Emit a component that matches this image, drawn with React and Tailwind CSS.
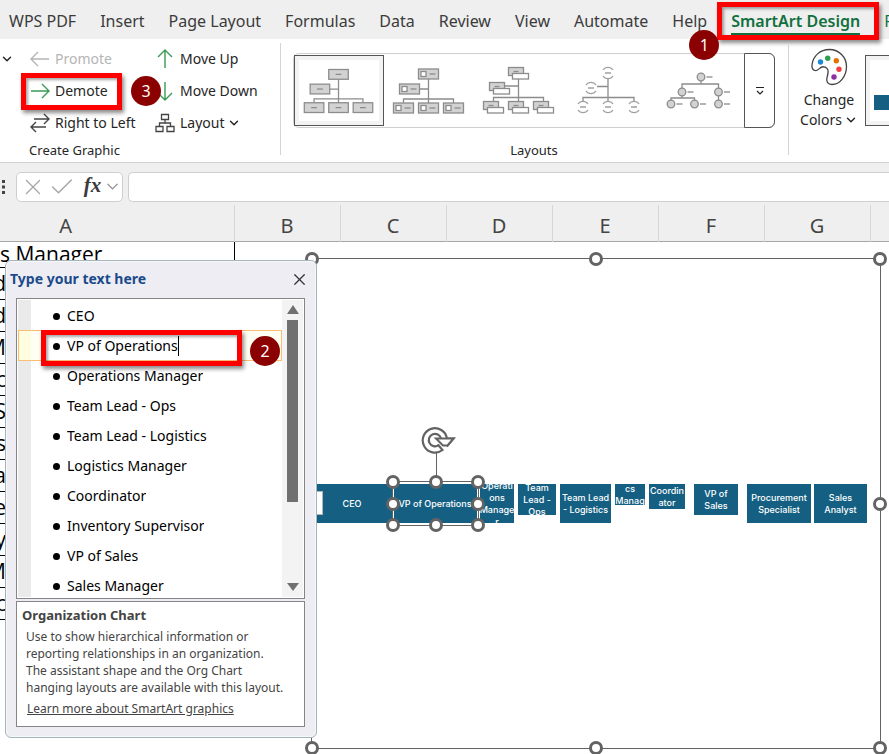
import React from 'react';
import { ChevronDown, X, Check } from 'lucide-react';

const TABS = ['WPS PDF', 'Insert', 'Page Layout', 'Formulas', 'Data', 'Review', 'View', 'Automate', 'Help'];

const COLUMNS = ['B', 'C', 'D', 'E', 'F', 'G'];

const ROWS = ['d', 'd', 'M', 'c', 'S', 's', 'a', 'e', 'y', 'M', 'c'];

const LINES = [
  'CEO',
  'VP of Operations',
  'Operations Manager',
  'Team Lead - Ops',
  'Team Lead - Logistics',
  'Logistics Manager',
  'Coordinator',
  'Inventory Supervisor',
  'VP of Sales',
  'Sales Manager',
];

// x is measured from the left edge of the diagram frame
const NODES = [
  { x: -1, w: 82, h: 39, text: ['CEO'] },
  { x: 81, w: 84, h: 39, text: ['VP of Operations'] },
  { x: 168, w: 34, h: 39, text: ['Operati', 'ons', 'Manage', 'r'] },
  { x: 206, w: 38, h: 31, text: ['Team', 'Lead -', 'Ops'] },
  { x: 248, w: 51, h: 39, text: ['Team Lead', '- Logistics'] },
  { x: 303, w: 30, h: 21, text: ['cs', 'Manag'] },
  { x: 337, w: 36, h: 25, text: ['Coordin', 'ator'] },
  { x: 382, w: 44, h: 31, text: ['VP of', 'Sales'] },
  { x: 435, w: 64, h: 39, text: ['Procurement', 'Specialist'] },
  { x: 502, w: 53, h: 39, text: ['Sales', 'Analyst'] },
];

const Step = ({ n, className }) => (
  <span className={`absolute z-30 flex h-[30px] w-[30px] items-center justify-center rounded-full bg-[#8b0000] font-['Noto_Sans',sans-serif] text-base font-normal text-white ${className}`}>
    {n}
  </span>
);

const RedBox = ({ className }) => (
  <span className={`pointer-events-none absolute z-20 border-[5px] border-[#fe0000] shadow-[2px_3px_4px_rgba(0,0,0,0.45),inset_2px_2px_3px_rgba(0,0,0,0.35)] ${className}`} />
);

const Caret = () => <ChevronDown size={14} strokeWidth={2.5} className="-ml-[3px] shrink-0" />;

const Arrow = ({ dir, color }) => {
  const paths = {
    left: 'M19 10H1M8 3L1 10L8 17',
    right: 'M1 10H19M12 3L19 10L12 17',
    up: 'M10 19V1M3 8L10 1L17 8',
    down: 'M10 1V19M3 12L10 19L17 12',
    swap: 'M4 6H19M14 1L19 6L14 11M16 14H1M6 9L1 14L6 19',
  };
  return (
    <svg width="20" height="20" viewBox="0 0 20 20" fill="none" stroke={color} strokeWidth="1.4" className="shrink-0">
      <path d={paths[dir]} />
    </svg>
  );
};

const LayoutIcon = () => (
  <svg width="20" height="20" viewBox="0 0 20 20" fill="none" stroke="#444" strokeWidth="1.3" className="shrink-0">
    <path d="M6.5 1.5h7v5h-7zM1 13.5h7v5H1zM12 13.5h7v5h-7zM10 6.5V10M4.5 13.5V10h11v3.5" />
  </svg>
);

const Palette = () => (
  <svg width="38" height="38" viewBox="0 0 38 38">
    <path
      d="M2 17C3 8 10 1.5 19.5 1.5C29 1.5 36.5 9 36.5 18.5C36.5 28 30 36.5 22 36.5C17.5 36.5 16 33 17 29.5C18 26 20 20 14 18.8C9.5 18 8.5 23.5 5 22.5C2.500 21.800 1.700 19.500 2 17Z"
      fill="#fff"
      stroke="#444"
      strokeWidth="1.3"
    />
    <circle cx="10.500" cy="14" r="2.700" fill="#1e88d8" />
    <circle cx="17.700" cy="10.300" r="2.700" fill="#2ea04f" />
    <circle cx="26.300" cy="12.700" r="2.700" fill="#e57200" />
    <circle cx="29" cy="21.300" r="2.700" fill="#ee3e42" />
    <circle cx="24" cy="29" r="2.700" fill="#8e2da5" />
  </svg>
);

const Thumb = ({ children }) => (
  <svg width="90" height="70" viewBox="0 0 90 70" fill="none" stroke="#8c8c8c" strokeWidth="1.3">
    {children}
  </svg>
);

const BOXES = [[34.5, 13], [15.5, 28], [9.5, 47], [34.5, 47], [59.5, 47]];

const OrgThumb = ({ picture }) => (
  <Thumb>
    <path d="M44.5 23V47M35.500 33H44.5M19.500 47V43H69.500V47" />
    {BOXES.map(([x, y]) => (
      <g key={`${x}-${y}`}>
        <rect x={x} y={y} width="20" height="10" fill="#d2d2d2" />
        {picture && <rect x={x + 2.5} y={y + 2.5} width="5" height="5" fill="#fff" />}
        <path d={picture ? `M${x + 11} ${y + 5}h6` : `M${x + 7} ${y + 5}h6`} />
      </g>
    ))}
  </Thumb>
);

const TitleThumb = () => (
  <Thumb>
    <path d="M44.5 20V46M30 30H44.5M19.500 46V41.500H69.500V46" />
    {[[34.5, 11.5], [15.5, 26.5], [9.5, 45.5], [34.5, 45.5], [59.5, 45.5]].map(([x, y]) => (
      <g key={`${x}-${y}`}>
        <rect x={x} y={y} width="15" height="8" fill="#d2d2d2" />
        <path d={`M${x + 5} ${y + 4}h5`} />
        <rect x={x + 4} y={y + 6} width="16" height="5.500" fill="#fff" />
      </g>
    ))}
  </Thumb>
);

const HalfCircleThumb = () => (
  <Thumb>
    <path d="M44 23V46M33 30.500H44M19 46V41.500H70V46" />
    {[[44, 17], [27, 32], [19, 51], [44, 51], [70, 51]].map(([x, y]) => (
      <path key={`${x}-${y}`} stroke="#a0a0a0" d={`M${x - 5} ${y - 3}A6 6 0 0 1 ${x + 5} ${y - 3}M${x - 5} ${y + 3}A6 6 0 0 0 ${x + 5} ${y + 3}M${x - 3} ${y}h6`} />
    ))}
  </Thumb>
);

const CircleThumb = () => (
  <Thumb>
    <path d="M47 21V28M28 36V28H64.500V48M17 48V42H40.500V48M28 36V42" />
    {[[47, 21], [28, 36], [64.5, 36], [17, 48], [40.5, 48], [64.5, 48]].map(([x, y]) => (
      <g key={`${x}-${y}`}>
        <circle cx={x} cy={y} r="3.800" fill="#d2d2d2" />
        <path d={`M${x + 5.5} ${y}h6`} />
      </g>
    ))}
  </Thumb>
);

const Handle = ({ className }) => (
  <span className={`absolute h-[14px] w-[14px] -translate-x-1/2 -translate-y-1/2 rounded-full border-[3px] border-[#636363] bg-white ${className}`} />
);

const Handles = () => (
  <>
    <Handle className="left-0 top-0" />
    <Handle className="left-1/2 top-0" />
    <Handle className="left-full top-0" />
    <Handle className="left-0 top-1/2" />
    <Handle className="left-full top-1/2" />
    <Handle className="left-0 top-full" />
    <Handle className="left-1/2 top-full" />
    <Handle className="left-full top-full" />
  </>
);

const TabBar = () => (
  <nav className="relative z-10 flex h-[39px] items-center gap-6 whitespace-nowrap bg-[#efefef] pl-[9px] pt-[3px] text-base text-[#3b3b3b]">
    {TABS.map((tab) => (
      <button key={tab} type="button" className="relative">
        {tab}
        {tab === 'Help' && <Step n="1" className="left-[17px] top-[21px]" />}
      </button>
    ))}
    <button type="button" className="relative font-semibold text-[#12703e]">
      SmartArt Design
      <span className="absolute inset-x-0 -bottom-[2px] h-[2px] bg-[#12703e]" />
      <RedBox className="-bottom-[7px] -left-[14px] -right-[19px] -top-[7px]" />
    </button>
    <button type="button" className="text-[#12703e]">Format</button>
  </nav>
);

const Command = ({ icon, label, className = '', children }) => (
  <button type="button" className={`relative flex h-8 items-center gap-[5px] ${className}`}>
    {icon}
    <span>{label}</span>
    {children}
  </button>
);

const Ribbon = () => (
  <div className="flex h-[124px] overflow-hidden whitespace-nowrap border-b border-[#d0d0d0] bg-white pt-[4px] text-sm text-[#262626] shadow-[0_1px_2px_rgba(0,0,0,0.15)]">
    <section className="mb-[7px] w-[281px] shrink-0 border-r border-[#d4d4d4]">
      <div className="flex">
        <button type="button" aria-label="More" className="flex h-8 w-[30px] items-center pl-[3px]">
          <Caret />
        </button>
        <div className="w-[125px]">
          <Command icon={<Arrow dir="left" color="#b5b5b5" />} label="Promote" className="text-[#b5b5b5]" />
          <Command icon={<Arrow dir="right" color="#3a9b55" />} label="Demote">
            <RedBox className="-bottom-[3px] -left-[9px] -right-[14px] -top-[2px]" />
            <Step n="3" className="left-[101px] top-px" />
          </Command>
          <Command icon={<Arrow dir="swap" color="#444" />} label="Right to Left" />
        </div>
        <div>
          <Command icon={<Arrow dir="up" color="#3a9b55" />} label="Move Up" />
          <Command icon={<Arrow dir="down" color="#3a9b55" />} label="Move Down" />
          <Command icon={<LayoutIcon />} label="Layout">
            <Caret />
          </Command>
        </div>
      </div>
      <h2 className="mt-px w-[149px] text-center text-[13px] leading-5">Create Graphic</h2>
    </section>

    <section className="mb-[7px] mt-[2px] shrink-0 border-r border-[#d4d4d4] pl-3 pr-[13px] pt-2">
      <div className="flex h-[75px] rounded-md border border-[#cfcfcf]">
        <button type="button" aria-label="Organization Chart" className="flex h-[71px] w-[90px] items-center justify-center self-center border border-[#555] shadow-[inset_0_0_0_4px_#f3f3f3]">
          <OrgThumb />
        </button>
        <button type="button" aria-label="Picture Organization Chart" className="w-[90px]"><OrgThumb picture /></button>
        <button type="button" aria-label="Name and Title Organization Chart" className="w-[90px]"><TitleThumb /></button>
        <button type="button" aria-label="Half Circle Organization Chart" className="w-[90px]"><HalfCircleThumb /></button>
        <button type="button" aria-label="Circle Picture Hierarchy" className="w-[90px]"><CircleThumb /></button>
        <button type="button" aria-label="More layouts" className="-my-px -mr-px flex w-[31px] items-center justify-center rounded-r-md border border-[#555]">
          <svg width="10" height="10" viewBox="0 0 10 10" fill="none" stroke="#222" strokeWidth="1.2">
            <path d="M1 1.500H9M2 5L5 8L8 5" />
          </svg>
        </button>
      </div>
      <h2 className="mt-3 text-center text-[13px] leading-5">Layouts</h2>
    </section>

    <button type="button" className="flex w-[76px] shrink-0 flex-col items-center self-start pl-1 pt-[5px] leading-5">
      <Palette />
      <span className="mt-[4px]">Change</span>
      <span className="flex items-center gap-[5px]">Colors <Caret /></span>
    </button>
    <button type="button" aria-label="SmartArt style" className="mt-[12px] h-[71px] w-[90px] shrink-0 border border-[#555] shadow-[inset_0_0_0_4px_#f3f3f3]">
      <svg width="88" height="69" viewBox="0 0 88 69">
        <rect x="23" y="34" width="10" height="8" fill="#9fb9c6" />
        <rect x="8" y="39" width="40" height="15" fill="#156082" />
      </svg>
    </button>
  </div>
);

const FormulaBar = () => (
  <div className="flex h-[42px] items-center gap-[5px] bg-[#efefef] pb-[4px] pt-[9px]">
    <svg width="11" height="16" viewBox="0 0 11 16" fill="#444" className="shrink-0">
      <path d="M2 1h3v3H2zM2 6.500h3v3H2zM2 12h3v3H2z" />
    </svg>
    <div className="flex h-[30px] w-[107px] shrink-0 items-center rounded-[5px] border border-[#cfcfcf] bg-white pl-[3px]">
      <button type="button" aria-label="Cancel"><X size={26} strokeWidth={1.2} className="text-[#a5a5a5]" /></button>
      <button type="button" aria-label="Enter" className="ml-[2px]"><Check size={28} strokeWidth={1.2} className="text-[#a5a5a5]" /></button>
      <button type="button" className="ml-[7px] w-[20px] pb-1 font-['Liberation_Serif',serif] text-[21px] font-bold italic leading-6 text-[#3b3b3b]">fx</button>
      <button type="button" aria-label="Functions" className="ml-[1px]"><ChevronDown size={19} strokeWidth={1.5} className="text-[#8a8a8a]" /></button>
    </div>
    <input type="text" aria-label="Formula" className="h-[30px] min-w-0 flex-1 rounded-l-[5px] border border-r-0 border-[#cfcfcf] bg-white px-2" />
  </div>
);

const Sheet = () => (
  <table className="w-full table-fixed self-start border-collapse [grid-area:1/1]">
    <thead>
      <tr className="h-9 border-b border-[#a6a6a6] bg-[#efefef] text-xl text-[#444]">
        <th className="w-[234px] border-r border-[#d6d6d6] pr-[102px] pt-[6px] text-center font-normal leading-6">A</th>
        {COLUMNS.map((col) => (
          <th key={col} className="w-[106px] border-r border-[#d6d6d6] p-0 pt-[6px] text-center font-normal leading-6">{col}</th>
        ))}
        <th />
      </tr>
    </thead>
    <tbody className="font-['Open_Sans','Noto_Sans',sans-serif] text-[21px] leading-6 text-black">
      <tr className="h-[26px]">
        <td className="border-b border-r border-black p-0 leading-5">s Manager</td>
      </tr>
      {ROWS.map((text, i) => (
        <tr key={i} className="h-8">
          <td className="border-b border-r border-black p-0">
            <div className="flex w-[6px] justify-end overflow-hidden">{text}</div>
          </td>
        </tr>
      ))}
    </tbody>
  </table>
);

const TextPane = () => (
  <aside className="relative z-10 ml-[5px] mt-[2px] w-[312px] shrink-0 self-start rounded-md border border-[#a3b5bb] bg-[#eeedf4] pb-[10px] pl-[10px] pr-[11px] shadow-[inset_0_0_0_1px_#f8f8fb]">
    <header className="-ml-[6px] flex h-[37px] items-center justify-between">
      <h2 className="pb-px text-sm font-bold text-[#1b4b8a]">Type your text here</h2>
      <button type="button" aria-label="Close" className="-mr-[4px]"><X size={19} strokeWidth={1.5} className="text-[#333]" /></button>
    </header>

    <div className="flex h-[301px] border border-[#858585] bg-white p-px">
      <ul className="relative flex-1 border-l-[13px] border-[#eaeaea] pt-px text-sm text-black">
        {LINES.map((line) => {
          const active = line === 'VP of Operations';
          return (
            <li key={line} className="relative flex h-[30px] items-center pl-[22px]">
              {active && (
                <>
                  <span className="absolute -left-[13px] -top-px right-0 h-[31px] border border-[#fbbd72] bg-[#fffef3]" />
                  <span className="absolute -left-[12px] top-0 h-[29px] w-3 bg-[#fffde0]" />
                  <span className="absolute left-[11px] right-[42px] top-0 h-[29px] bg-white" />
                </>
              )}
              <span className="relative mr-[7px] h-[7px] w-[7px] rounded-full bg-black" />
              <input type="text" aria-label={`Line ${line}`} defaultValue={line} className="relative field-sizing-content bg-transparent outline-none" />
              {active && (
                <>
                  <span className="relative h-5 w-px bg-black" />
                  <RedBox className="-top-px left-[10px] right-[40px] h-[36px]" />
                  <Step n="2" className="right-[2px] top-[5px]" />
                </>
              )}
            </li>
          );
        })}
      </ul>
      <div className="flex w-[21px] flex-col items-center bg-[#f3f3f3] pb-[5px] pt-[5px]">
        <svg width="12" height="10" viewBox="0 0 12 10"><path d="M6 0L12 9H0Z" fill="#707070" /></svg>
        <div className="mt-[5px] h-[182px] w-[11px] bg-[#707070]" />
        <svg width="12" height="10" viewBox="0 0 12 10" className="mt-auto"><path d="M6 9L0 1H12Z" fill="#707070" /></svg>
      </div>
    </div>

    <div className="mt-[2px] h-[126px] whitespace-nowrap border border-[#858585] bg-white pl-[5px] pt-1 text-xs text-[#444]">
      <h3 className="text-[13px] font-bold leading-[18px]">Organization Chart</h3>
      <p className="mt-[4px] pl-1 leading-[17px]">
        Use to show hierarchical information or<br />
        reporting relationships in an organization.<br />
        The assistant shape and the Org Chart<br />
        hanging layouts are available with this layout.
      </p>
      <a href="#learn" className="ml-[5px] mt-[4px] inline-block leading-[18px] underline">Learn more about SmartArt graphics</a>
    </div>
  </aside>
);

const Diagram = () => (
  <div className="relative -ml-[6px] mr-[8px] flex-1 border border-[#636363]">
    <Handles />
    <div className="absolute left-0 top-[225px] font-['Inter',sans-serif] text-[9px] font-medium leading-3 text-white">
      {NODES.map(({ x, w, h, text }) => (
        <div
          key={text.join(' ')}
          className="absolute top-0 flex flex-col items-center justify-center overflow-hidden whitespace-nowrap bg-[#156082]"
          style={{ left: x, width: w, height: h }}
        >
          {text.map((part) => <span key={part}>{part}</span>)}
        </div>
      ))}
      <span className="absolute left-0 top-[7px] h-6 w-[11px] border border-[#b5b5b5] bg-white" />
      {/* selection round the active node */}
      <div className="absolute -top-[3px] left-[80px] h-[45px] w-[87px] border border-[#636363] shadow-[inset_0_0_0_1px_#fff]">
        <span className="absolute -top-[36px] left-1/2 h-9 w-px bg-[#636363]" />
        <svg width="38" height="32" viewBox="0 0 38 32" className="absolute -top-[58px] left-[26px]" fill="none">
          <path d="M23.200 21.500A9.300 9.300 0 1 1 25 13.500V18L21 16" stroke="#fff" strokeWidth="8" />
          <path
            d="M23.500 26A12.200 12.200 0 1 1 28 14.500H34.500L28.500 21.500L22 14.500A6.200 6.200 0 1 0 19.500 21.200Z"
            fill="#fff"
            stroke="#636363"
            strokeWidth="2.200"
          />
          <path d="M17 14.500L24 21.500L28.500 21.500L34.500 14.500Z" fill="#fff" stroke="#636363" strokeWidth="2" />
        </svg>
        <Handles />
      </div>
    </div>
  </div>
);

const App = () => {
  return (
    <div className="flex min-h-screen flex-col overflow-hidden bg-white font-['Noto_Sans',sans-serif]">
      <TabBar />
      <Ribbon />
      <FormulaBar />
      <main className="grid flex-1">
        <Sheet />
        <div className="flex pb-[5px] pt-[53px] [grid-area:1/1]">
          <TextPane />
          <Diagram />
        </div>
      </main>
    </div>
  );
};

export default App;
